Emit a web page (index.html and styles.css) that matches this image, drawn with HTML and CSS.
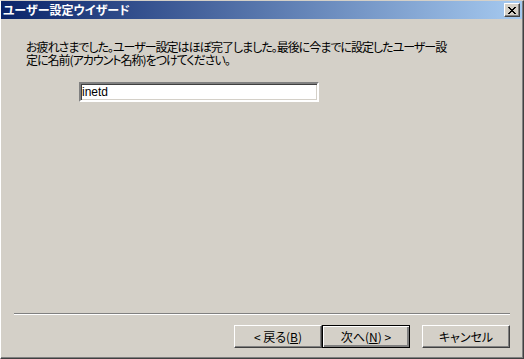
FILE: index.html
```html
<!DOCTYPE html>
<html lang="ja">
<head>
<meta charset="utf-8">
<title>ユーザー設定ウイザード</title>
<link rel="stylesheet" href="styles.css">
</head>
<body>
<div class="window">
  <div class="frame">
    <div class="titlebar">
      <span class="title">ユーザー設定ウイザード</span>
      <button class="close" aria-label="閉じる">
        <svg width="8" height="7" viewBox="0 0 8 7"><path d="M0 0h2v1h1v1h2v-1h1v-1h2v1h-1v1h-1v1h-1v1h1v1h1v1h1v1h-2v-1h-1v-1h-2v1h-1v1h-2v-1h1v-1h1v-1h1v-1h-1v-1h-1v-1h-1z" fill="#000"/></svg>
      </button>
    </div>
    <div class="body">
      <p class="message">お疲れさまでした。ユーザー設定はほぼ完了しました。最後に今までに設定したユーザー設<br>定に名前(アカウント名称)をつけてください。</p>
      <div class="field"><input class="textbox" type="text" value="inetd"></div>
      <div class="separator"></div>
      <div class="buttons">
        <div class="pair">
          <button class="btn">&lt; 戻る(<u>B</u>)</button>
          <button class="btn default">次へ(<u>N</u>) &gt;</button>
        </div>
        <button class="btn">キャンセル</button>
      </div>
    </div>
  </div>
</div>
</body>
</html>
```

FILE: styles.css
```css
* { box-sizing: border-box; }
html, body { margin: 0; padding: 0; }
body {
  width: 524px;
  height: 359px;
  background: #d4d0c8;
  font-family: "Noto Sans CJK JP", "Noto Sans", sans-serif;
  font-size: 12px;
  overflow: hidden;
}
.window {
  width: 524px;
  height: 359px;
  border-top: 1px solid #d4d0c8;
  border-left: 1px solid #ffffff;
  border-right: 1px solid #404040;
  border-bottom: 1px solid #404040;
  background: #d4d0c8;
}
.frame {
  height: 100%;
  border-right: 1px solid #808080;
  border-bottom: 1px solid #808080;
  display: flex;
  flex-direction: column;
}
.titlebar {
  height: 18px;
  background: linear-gradient(to right, #0a246a, #a6caf0);
  display: flex;
  align-items: center;
  justify-content: space-between;
  padding: 0 2px 0 2px;
}
.title {
  color: #fff;
  font-weight: bold;
  font-size: 12px;
  line-height: 18px;
  font-feature-settings: "palt" 1;
}
.close {
  width: 16px;
  height: 14px;
  padding: 0;
  margin: 0;
  background: #d4d0c8;
  border: 1px solid;
  border-color: #ffffff #404040 #404040 #ffffff;
  box-shadow: inset -1px -1px 0 #808080;
  display: flex;
  align-items: center;
  justify-content: center;
}
.close svg { display: block; }
.body {
  flex: 1;
  display: flex;
  flex-direction: column;
}
.message {
  margin: 21px 0 0 25px;
  line-height: 13px;
  font-size: 12px;
  color: #000;
  font-feature-settings: "palt" 1;
  letter-spacing: -1px;
}
.field {
  margin: 16px 0 0 78px;
}
.textbox {
  display: block;
  width: 240px;
  height: 20px;
  margin: 0;
  padding: 0 1px;
  border: 2px solid;
  border-color: #808080 #ffffff #ffffff #808080;
  box-shadow: inset 1px 1px 0 #404040, inset -1px -1px 0 #d4d0c8;
  background: #fff;
  font-family: "Liberation Sans", Arial, sans-serif;
  font-size: 12px;
  color: #000;
  outline: none;
}
.separator {
  margin: auto 12px 0 13px;
  height: 2px;
  border-top: 1px solid #808080;
  border-bottom: 1px solid #ffffff;
}
.buttons {
  margin: 10px 12px 9px 0;
  display: flex;
  justify-content: flex-end;
  gap: 12px;
}
.pair { display: flex; }
.btn {
  width: 88px;
  height: 23px;
  margin: 0;
  padding: 0;
  background: #d4d0c8;
  border: 1px solid;
  border-color: #ffffff #404040 #404040 #ffffff;
  box-shadow: inset -1px -1px 0 #808080;
  font-family: "Noto Sans CJK JP", sans-serif;
  font-size: 12px;
  font-feature-settings: "palt" 1;
  color: #000;
  line-height: 20px;
}
.btn.default {
  border: 1px solid #000;
  box-shadow: inset 1px 1px 0 #ffffff, inset -2px -2px 0 #808080, inset -1px -1px 0 #404040;
}
.btn u { text-underline-offset: 1px; }
```
